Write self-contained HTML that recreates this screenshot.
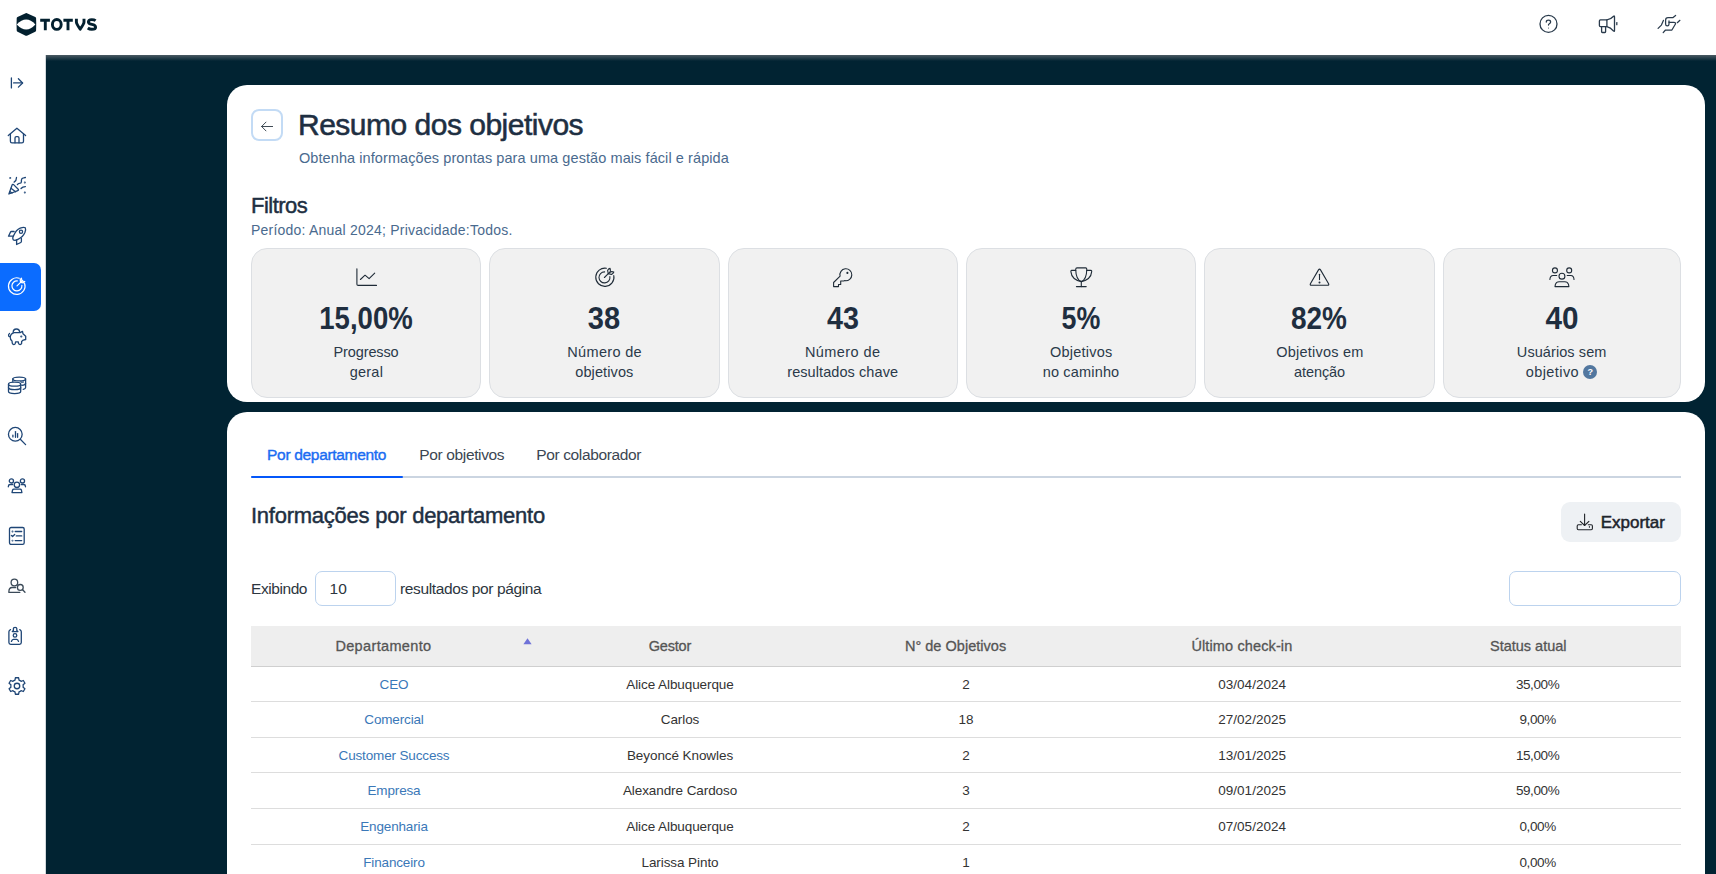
<!DOCTYPE html>
<html lang="pt">
<head>
<meta charset="utf-8">
<title>Resumo dos objetivos</title>
<style>
*{box-sizing:border-box;margin:0;padding:0}
html,body{width:1716px;height:874px;overflow:hidden;background:#fff;font-family:"Liberation Sans",sans-serif;color:#1d2b3a}
.abs{position:absolute}
#topbar{position:absolute;left:0;top:0;width:1716px;height:55px;background:#fff}
#side{position:absolute;left:0;top:55px;width:46px;height:819px;background:#fff;box-shadow:inset -1px 0 0 #d3d8dc}
#dark{position:absolute;left:46px;top:55px;width:1670px;height:819px;background:#012332}
#dark:before{content:"";position:absolute;left:0;top:0;right:0;height:6px;background:linear-gradient(#4b5a63,#012332)}
.card{position:absolute;left:227px;width:1478px;background:#fff;border-radius:20px}
#card1{top:85px;height:317px}
#card2{top:412px;height:500px}
.stat{position:absolute;top:248px;height:150px;background:#f1f1f1;border:1px solid #dcdfe3;border-radius:16px}
.t{position:absolute;white-space:nowrap;line-height:1}
.c{text-align:center}
.q{display:inline-block;width:14px;height:14px;border-radius:50%;background:#52779f;color:#fff;font-size:9px;font-weight:bold;line-height:14px;text-align:center;vertical-align:2px;-webkit-text-stroke:0}

</style>
</head>
<body>
<div id="topbar">
<svg class="abs" style="left:0;top:0" width="110" height="55" viewBox="0 0 110 55">
 <path fill="#03202f" stroke="#03202f" stroke-width="3" stroke-linejoin="round" d="M26.3 14.5 L34.6 18.4 Q34.9 24.4 34.6 30.4 L26.3 34.3 L18.2 30.4 Q17.9 24.4 18.2 18.4 Z"/>
 <path fill="#fff" d="M16.7 24.55 Q26.3 14.6 35.4 24.55 Q26.3 34.5 16.7 24.55 Z"/>
 <g fill="none" stroke="#03202f" stroke-width="2.9">
  <path d="M40.2 20.2 H49.9 M45.3 20.2 V30.2"/>
  <ellipse cx="56.8" cy="24.45" rx="4.4" ry="4.9"/>
  <path d="M63.4 20.2 H72.8 M68 20.2 V30.2"/>
  <path stroke-linejoin="round" d="M76.4 18.8 V22.2 Q76.6 24.2 80.2 29.2 Q83.8 24.2 84 22.2 V18.8"/>
  <path d="M95.6 20.6 Q94.2 19.6 91.8 19.6 Q88.4 19.6 88.4 22 Q88.4 23.8 91.8 24.4 Q95.6 25 95.6 27.2 Q95.6 29.3 91.8 29.3 Q89.4 29.3 87.8 28"/>
 </g>
</svg>
<svg class="abs" style="left:1536px;top:12px" width="26" height="26" viewBox="0 0 26 26" fill="none" stroke="#2a3b4c" stroke-width="1.3" stroke-linecap="round">
 <circle cx="12.5" cy="11.9" r="8.5"/>
 <path d="M10.3 10 Q10.4 8.2 12.5 8.2 Q14.6 8.2 14.6 10 Q14.6 11.1 13.4 11.7 Q12.5 12.2 12.5 13.1"/>
 <circle cx="12.5" cy="15.9" r="0.5" fill="#2a3b4c" stroke="none"/>
</svg>
<svg class="abs" style="left:1596px;top:12px" width="26" height="26" viewBox="0 0 26 26" fill="none" stroke="#2a3b4c" stroke-width="1.3" stroke-linejoin="round" stroke-linecap="round">
 <path d="M4.4 7.9 H10.9 V14.6 H4.4 Q3.4 14.6 3.4 13.6 V8.9 Q3.4 7.9 4.4 7.9 Z"/>
 <path d="M10.9 7.9 Q14.5 7.6 17.6 4.3 Q18.5 3.5 18.5 4.7 V18.6 Q18.5 19.9 17.6 19.1 Q14.5 15.3 10.9 14.6"/>
 <path d="M5.6 14.6 V19.8 Q5.6 20.5 6.3 20.5 H8.9 Q9.6 20.5 9.6 19.8 V14.6"/>
 <path d="M20.8 10.6 V12.7"/>
</svg>
<svg class="abs" style="left:1655px;top:12px" width="28" height="26" viewBox="0 0 28 26" fill="none" stroke="#2a3b4c" stroke-width="1.25" stroke-linejoin="round" stroke-linecap="round">
 <path d="M3.1 16.4 L6.4 13.1 L8.4 8.4"/>
 <path d="M20.6 3.4 L17.8 5.7 H13 Q10.6 5.7 10.6 8.2 V12 Q10.6 13.9 12.3 13.9 Q14 13.9 14 12 V8.9"/>
 <path d="M14 10.3 H19.1 Q20.6 10.3 20.6 11.8 L16.9 18 H10.5 L8.2 20.6"/>
 <path d="M22.3 10.7 L24.9 8.3"/>
</svg>
</div>
<div id="side"></div>
<div class="abs" style="left:0;top:263px;width:41px;height:48px;background:#0b6cff;border-radius:0 7px 7px 0"></div>
<svg class="abs" style="left:4px;top:70px" width="26" height="26" viewBox="0 0 26 26" fill="none" stroke="#1f4676" stroke-width="1.3" stroke-linecap="round" stroke-linejoin="round"><path d="M7.4 8 V17.9"/><path d="M9.6 12.95 H18.5"/><path d="M14.4 8.8 L18.6 12.95 L14.4 17.1"/></svg>
<svg class="abs" style="left:4px;top:122px" width="26" height="26" viewBox="0 0 26 26" fill="none" stroke="#1f4676" stroke-width="1.3" stroke-linecap="round" stroke-linejoin="round"><path d="M4.3 13.5 L12.9 6.25 L21.6 13.5"/><path d="M6.4 12 V19.2 Q6.4 20.8 8 20.8 H17.9 Q19.5 20.8 19.5 19.2 V12"/><path d="M11 20.8 V16 Q11 14.6 12.4 14.6 H13.6 Q15 14.6 15 16 V20.8"/></svg>
<svg class="abs" style="left:4px;top:172px" width="26" height="26" viewBox="0 0 26 26" fill="none" stroke="#1f4676" stroke-width="1.3" stroke-linecap="round" stroke-linejoin="round"><path d="M4.9 22 L8.1 13 Q8.6 11.8 9.6 12.6 L14.2 17.2 Q15 18.2 13.8 18.6 Z"/><path d="M7 16.3 L11.6 19.8"/><path d="M5.9 19.6 L8.1 21"/><circle cx="6.25" cy="6.1" r="0.35"/><path d="M12.5 5.4 Q12.5 8.6 10.1 10.1"/><path d="M13.4 12.5 Q14.6 11.2 16.3 11.1 Q17.4 11 17.4 9.4 V8 Q17.6 6 19.6 5.8 L21.4 5.5"/><circle cx="20.8" cy="10.4" r="0.35"/><path d="M17 16.5 Q18.6 14.6 21.4 14.6"/><circle cx="20.8" cy="20.5" r="0.35"/></svg>
<svg class="abs" style="left:4px;top:223px" width="26" height="26" viewBox="0 0 26 26" fill="none" stroke="#1f4676" stroke-width="1.3" stroke-linecap="round" stroke-linejoin="round"><path d="M9.3 16.9 Q8 15.3 9.8 12.2 Q12 7 16.2 5.1 Q19.7 3.8 21.3 4.7 Q22.1 6.3 20.9 9.4 Q19 13.8 13.9 16.4 Q11 17.9 9.3 16.9 Z"/><circle cx="17" cy="8.8" r="1.6"/><path d="M10.1 8.5 H7.4 Q6.8 8.5 6.5 9.1 L4.5 13.2 H8.7"/><path d="M17.4 15.4 V18.6 Q17.4 19.2 16.8 19.5 L12.6 21.5 V17.2"/></svg>
<svg class="abs" style="left:4px;top:273px" width="26" height="26" viewBox="0 0 26 26" fill="none" stroke="#fff" stroke-width="1.2" stroke-linecap="round" stroke-linejoin="round"><path d="M20.6 10.4 A8.3 8.3 0 1 1 15.3 5.2"/><path d="M17.9 12.4 A5 5 0 1 1 13.3 7.9"/><path d="M13 12.9 L18.4 7.6"/><path d="M16.6 9.4 L16.2 6.6 L17.4 5.2 L18 7.9 Z"/><path d="M16.6 9.4 L19.4 9.8 L20.8 8.6 L18.1 8 Z"/></svg>
<svg class="abs" style="left:4px;top:324px" width="26" height="26" viewBox="0 0 26 26" fill="none" stroke="#1f4676" stroke-width="1.3" stroke-linecap="round" stroke-linejoin="round"><path d="M9.2 8.2 A3.2 3.2 0 0 1 15.6 8.2"/><path d="M10.1 8.6 H16.1 L18.5 7.4 L19 9.8 L21.7 12.2 V15.5 L19.3 16.1 L17.6 17.6 V19.6 Q17.2 20.5 16.1 20.5 Q14.6 20.3 14.5 19.3 L14.3 17.9 H11.6 L11.3 19.4 Q11 20.5 9.8 20.5 Q8.4 20.3 8.3 19.3 L8 17 Q6.2 15.6 6.25 13.2 Q6.3 9.8 10.1 8.6 Z"/><path d="M5.5 9.5 Q4.2 10.6 4.6 11.9 Q5.1 12.8 6.3 12.5"/><circle cx="17.3" cy="12.5" r="0.45"/></svg>
<svg class="abs" style="left:4px;top:373px" width="26" height="26" viewBox="0 0 26 26" fill="none" stroke="#1f4676" stroke-width="1.3" stroke-linecap="round" stroke-linejoin="round"><ellipse cx="10.6" cy="11.2" rx="6.1" ry="2"/><path d="M4.5 11.2 V18.6 Q4.5 20.6 10.6 20.6 Q16.7 20.6 16.7 18.6 V11.2"/><path d="M4.5 14.6 Q4.6 16.6 10.6 16.6 Q16.6 16.6 16.7 14.6"/><path d="M8.8 8.4 V6 Q8.8 4.1 15.2 4.1 Q21.6 4.1 21.6 6 V14.5 Q21.6 15.9 19.3 16.3"/><path d="M8.8 6 Q8.9 7.9 15.2 7.9 Q21.5 7.9 21.6 6"/><path d="M16.9 8.7 Q17.5 9.2 19.3 9" /><path d="M21.6 10.3 Q21.4 12 17.8 12.4"/></svg>
<svg class="abs" style="left:4px;top:423px" width="26" height="26" viewBox="0 0 26 26" fill="none" stroke="#1f4676" stroke-width="1.3" stroke-linecap="round" stroke-linejoin="round"><circle cx="11.3" cy="11.3" r="6.85"/><path d="M16.3 16.3 L21.6 21.6"/><path d="M8.9 12.1 V13.9"/><path d="M11.5 8.6 V14.3"/><path d="M13.6 10.6 V14.3"/></svg>
<svg class="abs" style="left:4px;top:473px" width="26" height="26" viewBox="0 0 26 26" fill="none" stroke="#1f4676" stroke-width="1.3" stroke-linecap="round" stroke-linejoin="round"><circle cx="7.4" cy="7.9" r="2.1"/><circle cx="18.45" cy="7.9" r="2.1"/><circle cx="12.9" cy="11.8" r="2.7"/><path d="M8.6 11.5 H5.9 Q4.3 11.7 4.3 13.8"/><path d="M17.3 11.5 H20 Q21.5 11.7 21.5 13.8"/><path d="M8 19.6 L8.6 17 Q8.9 16.2 9.8 16.2 H16.1 Q17.1 16.2 17.4 17 L17.9 19.6 Z"/></svg>
<svg class="abs" style="left:4px;top:523px" width="26" height="26" viewBox="0 0 26 26" fill="none" stroke="#1f4676" stroke-width="1.3" stroke-linecap="round" stroke-linejoin="round"><rect x="5.5" y="4.5" width="14.7" height="16.9" rx="1.6"/><circle cx="8.5" cy="8.5" r="0.3"/><circle cx="8.5" cy="17.6" r="0.3"/><path d="M11.2 8.5 H17.7"/><path d="M11.2 17.6 H17.7"/><path d="M12.3 12.95 H17.7"/><path d="M7.4 12.5 L8.6 13.5 L10.7 11.5"/></svg>
<svg class="abs" style="left:4px;top:574px" width="26" height="26" viewBox="0 0 26 26" fill="none" stroke="#3b4a58" stroke-width="1.3" stroke-linecap="round" stroke-linejoin="round"><circle cx="10.4" cy="8.5" r="3.3"/><path d="M11.6 13.5 H8 Q5.1 13.7 4.9 17.2 V18.45 H15.8"/><circle cx="16.3" cy="13.4" r="2.9"/><path d="M18.4 15.5 L21 18.3"/></svg>
<svg class="abs" style="left:4px;top:623px" width="26" height="26" viewBox="0 0 26 26" fill="none" stroke="#1f4676" stroke-width="1.3" stroke-linecap="round" stroke-linejoin="round"><path d="M6.5 6.6 Q4.9 7.3 4.9 8.8 V19.5 Q4.9 21.3 6.7 21.3 H15.5 Q17.3 21.3 17.3 19.5 V8.8 Q17.3 7.3 15.8 6.6"/><path d="M8.3 8.6 L9.4 7.6 V5.6 Q9.4 4.4 11.1 4.4 Q12.8 4.4 12.8 5.6 V7.6 L13.9 8.6 Z"/><circle cx="11" cy="12.4" r="1.8"/><path d="M7.4 18.45 Q8 16.4 9.4 16.4 H12.7 Q14 16.4 14.5 18.45"/></svg>
<svg class="abs" style="left:4px;top:673px" width="26" height="26" viewBox="0 0 26 26" fill="none" stroke="#1f4676" stroke-width="1.3" stroke-linecap="round" stroke-linejoin="round"><path d="M9.90 7.63 L10.98 7.14 L11.40 4.75 L14.60 4.75 L15.02 7.14 L16.10 7.63 L17.07 8.32 L19.34 7.49 L20.94 10.27 L19.09 11.82 L19.20 13.00 L19.09 14.18 L20.94 15.73 L19.34 18.51 L17.07 17.68 L16.10 18.37 L15.02 18.86 L14.60 21.25 L11.40 21.25 L10.98 18.86 L9.90 18.37 L8.93 17.68 L6.66 18.51 L5.06 15.73 L6.91 14.18 L6.80 13.00 L6.91 11.82 L5.06 10.27 L6.66 7.49 L8.93 8.32 Z"/><circle cx="13" cy="13" r="2.75"/></svg>
<div id="dark"></div>

<div class="card" id="card1"></div>
<div class="abs" style="left:251px;top:109px;width:32px;height:32px;border:2px solid #c3dbf5;border-radius:8px"></div>
<svg class="abs" style="left:251px;top:109px" width="32" height="32" viewBox="0 0 32 32" fill="none" stroke="#36414c" stroke-width="0.95" stroke-linecap="round" stroke-linejoin="round"><path d="M10.6 17.5 H21.6"/><path d="M15 13.1 L10.6 17.5 L15 21.9"/></svg>
<div class="t" id="title" style="left:298.0px;top:110px;font-size:30px;color:#1e2f42;font-weight:normal;letter-spacing:-0.504px;-webkit-text-stroke:0.55px #1e2f42">Resumo dos objetivos</div>
<div class="t" id="sub" style="left:299.0px;top:151px;font-size:14.5px;color:#4a6a8e;font-weight:normal;letter-spacing:0.081px">Obtenha informações prontas para uma gestão mais fácil e rápida</div>
<div class="t" id="filtros" style="left:251.0px;top:195px;font-size:22px;color:#1e2f42;font-weight:normal;letter-spacing:-0.514px;-webkit-text-stroke:0.45px #1e2f42">Filtros</div>
<div class="t" id="periodo" style="left:251.0px;top:223px;font-size:14px;color:#4a6a8e;font-weight:normal;letter-spacing:0.219px">Período: Anual 2024; Privacidade:Todos.</div>
<div class="stat" style="left:251px;width:230px"></div>
<svg class="abs" style="left:353px;top:264px" width="26" height="26" viewBox="0 0 26 26" fill="none" stroke="#1f2b37" stroke-width="1.1" stroke-linecap="round" stroke-linejoin="round"><path d="M3.9 4.8 V20.2 Q3.9 21.4 5.2 21.4 H23.5"/><path d="M7.4 15.5 L12.05 11.2 L16.1 14.6 L21.7 9.1"/></svg>
<div class="t c" id="num0" style="left:166.10000000000002px;width:400px;top:303px;font-size:30.5px;color:#1f2e3f;font-weight:bold;letter-spacing:0px;transform:scaleX(0.903)">15,00%</div>
<div class="t c" id="l0a" style="left:166.05px;width:400px;top:345px;font-size:14.5px;color:#2b3a4a;font-weight:normal;letter-spacing:-0.117px">Progresso</div>
<div class="t c" id="l0b" style="left:166.39999999999998px;width:400px;top:365px;font-size:14.5px;color:#2b3a4a;font-weight:normal;letter-spacing:0.25px">geral</div>
<div class="stat" style="left:489px;width:231px"></div>
<svg class="abs" style="left:591px;top:264px" width="26" height="26" viewBox="0 0 26 26" fill="none" stroke="#1f2b37" stroke-width="1.1" stroke-linecap="round" stroke-linejoin="round"><path d="M22.8 11.6 A9.1 9.1 0 1 1 15.4 4.3"/><path d="M18.9 12.6 A5.5 5.5 0 1 1 13.6 7.9"/><path d="M13.4 13.5 L17.3 9.7"/><path d="M17.3 9.7 L16.6 6.5 Q17.4 4.7 19 4.3 Q19.8 6.6 19.2 8"/><path d="M17.3 9.7 L20.5 10.4 Q22.3 9.6 22.8 8 Q20.6 7.2 19.2 8 Z"/></svg>
<div class="t c" id="num1" style="left:404.29999999999995px;width:400px;top:303px;font-size:30.5px;color:#1f2e3f;font-weight:bold;letter-spacing:0px;transform:scaleX(0.952)">38</div>
<div class="t c" id="l1a" style="left:404.65px;width:400px;top:345px;font-size:14.5px;color:#2b3a4a;font-weight:normal;letter-spacing:0.333px">Número de</div>
<div class="t c" id="l1b" style="left:404.35px;width:400px;top:365px;font-size:14.5px;color:#2b3a4a;font-weight:normal;letter-spacing:0.117px">objetivos</div>
<div class="stat" style="left:728px;width:230px"></div>
<svg class="abs" style="left:830px;top:264px" width="26" height="26" viewBox="0 0 26 26" fill="none" stroke="#1f2b37" stroke-width="1.1" stroke-linecap="round" stroke-linejoin="round"><path d="M10.1 12.2 A5.95 5.95 0 1 1 14.9 16.6 L13.7 17 H10.7 V20.5 H8.5 V22.6 H3.6 V18.5 Z"/><circle cx="17.4" cy="8.9" r="0.5" fill="#1f2b37"/></svg>
<div class="t c" id="num2" style="left:642.9px;width:400px;top:303px;font-size:30.5px;color:#1f2e3f;font-weight:bold;letter-spacing:0px;transform:scaleX(0.941)">43</div>
<div class="t c" id="l2a" style="left:642.65px;width:400px;top:345px;font-size:14.5px;color:#2b3a4a;font-weight:normal;letter-spacing:0.417px">Número de</div>
<div class="t c" id="l2b" style="left:642.7px;width:400px;top:365px;font-size:14.5px;color:#2b3a4a;font-weight:normal;letter-spacing:0.08px">resultados chave</div>
<div class="stat" style="left:966px;width:230px"></div>
<svg class="abs" style="left:1068px;top:264px" width="26" height="26" viewBox="0 0 26 26" fill="none" stroke="#1f2b37" stroke-width="1.1" stroke-linecap="round" stroke-linejoin="round"><path d="M13.3 17.6 Q7.9 15.6 7.7 5.2 Q7.8 3.9 9 3.9 H17.6 Q18.8 3.9 18.8 5.2 Q18.6 15.6 13.3 17.6 Z"/><path d="M7.7 6.4 H3.6 Q2.8 6.4 2.9 7.6 Q3.6 15.5 13.3 17.6 Q23 15.5 23.7 7.6 Q23.8 6.4 23 6.4 H18.8"/><path d="M13.3 17.6 V22.6"/><path d="M8.4 22.6 H18.2"/></svg>
<div class="t c" id="num3" style="left:880.5999999999999px;width:400px;top:303px;font-size:30.5px;color:#1f2e3f;font-weight:bold;letter-spacing:0px;transform:scaleX(0.88)">5%</div>
<div class="t c" id="l3a" style="left:881.2px;width:400px;top:345px;font-size:14.5px;color:#2b3a4a;font-weight:normal;letter-spacing:0.225px">Objetivos</div>
<div class="t c" id="l3b" style="left:881.0px;width:400px;top:365px;font-size:14.5px;color:#2b3a4a;font-weight:normal;letter-spacing:0.175px">no caminho</div>
<div class="stat" style="left:1204px;width:231px"></div>
<svg class="abs" style="left:1306px;top:264px" width="26" height="26" viewBox="0 0 26 26" fill="none" stroke="#1f2b37" stroke-width="1.1" stroke-linecap="round" stroke-linejoin="round"><path d="M12.5 5.9 Q13.5 4.4 14.5 5.9 L22.6 19.8 Q23.3 21.3 21.6 21.3 H5.4 Q3.7 21.3 4.4 19.8 Z"/><path d="M13.5 10.3 V15.6"/><circle cx="13.5" cy="18.45" r="0.45" fill="#1f2b37"/></svg>
<div class="t c" id="num4" style="left:1119.2px;width:400px;top:303px;font-size:30.5px;color:#1f2e3f;font-weight:bold;letter-spacing:0px;transform:scaleX(0.917)">82%</div>
<div class="t c" id="l4a" style="left:1119.95px;width:400px;top:345px;font-size:14.5px;color:#2b3a4a;font-weight:normal;letter-spacing:0.211px">Objetivos em</div>
<div class="t c" id="l4b" style="left:1119.5px;width:400px;top:365px;font-size:14.5px;color:#2b3a4a;font-weight:normal;letter-spacing:-0.065px">atenção</div>
<div class="stat" style="left:1443px;width:238px"></div>
<svg class="abs" style="left:1549px;top:264px" width="26" height="26" viewBox="0 0 26 26" fill="none" stroke="#1f2b37" stroke-width="1.1" stroke-linecap="round" stroke-linejoin="round"><circle cx="5.95" cy="6.4" r="2.5"/><circle cx="20.2" cy="6.4" r="2.5"/><circle cx="12.95" cy="12.2" r="2.95"/><path d="M7.7 11.5 H4.2 Q1 11.7 0.9 15.5"/><path d="M18.2 11.5 H21.8 Q24.9 11.7 25 15.5"/><path d="M6 22.6 L6.4 20.4 Q7.3 17.7 10 17.7 H15.9 Q18.6 17.7 19.5 20.4 L19.9 22.6 Z"/></svg>
<div class="t c" id="num5" style="left:1362.0px;width:400px;top:303px;font-size:30.5px;color:#1f2e3f;font-weight:bold;letter-spacing:0px;transform:scaleX(0.973)">40</div>
<div class="t c" id="l5a" style="left:1361.65px;width:400px;top:345px;font-size:14.5px;color:#2b3a4a;font-weight:normal;letter-spacing:0.081px">Usuários sem</div>
<div class="t c" id="l5b" style="left:1361.65px;width:400px;top:365px;font-size:14.5px;color:#2b3a4a;font-weight:normal;letter-spacing:0.409px">objetivo <span class="q">?</span></div>
<div class="card" id="card2"></div>
<div class="abs" style="left:251px;top:476px;width:1430px;height:2px;background:#cbd5e1"></div>
<div class="abs" style="left:251px;top:476px;width:152px;height:2px;background:#0457fa;border-radius:1px"></div>
<div class="t" id="tab1" style="left:267.1px;top:447px;font-size:15.5px;color:#1a6cf2;font-weight:normal;letter-spacing:-0.32px;-webkit-text-stroke:0.4px #1a6cf2">Por departamento</div>
<div class="t" id="tab2" style="left:419.3px;top:447px;font-size:15.5px;color:#3b4652;font-weight:normal;letter-spacing:-0.358px">Por objetivos</div>
<div class="t" id="tab3" style="left:536.3px;top:447px;font-size:15.5px;color:#3b4652;font-weight:normal;letter-spacing:-0.372px">Por colaborador</div>
<div class="t" id="info" style="left:251.0px;top:505px;font-size:22px;color:#1e2f42;font-weight:normal;letter-spacing:-0.246px;-webkit-text-stroke:0.45px #1e2f42">Informações por departamento</div>
<div class="abs" style="left:1561px;top:502px;width:120px;height:40px;background:#eef1f4;border-radius:9px"></div>
<svg class="abs" style="left:1570px;top:508px" width="30" height="28" viewBox="0 0 30 28" fill="none" stroke="#1f2328" stroke-width="1.1" stroke-linecap="round" stroke-linejoin="round"><path d="M14.6 6.1 V17.3"/><path d="M10.3 13.3 L14.6 17.5 L18.9 13.3"/><path d="M11.4 16.7 H8.4 Q7.2 16.7 7.2 17.9 V20.6 Q7.2 21.8 8.4 21.8 H21.2 Q22.4 21.8 22.4 20.6 V17.9 Q22.4 16.7 21.2 16.7 H18.3"/><path d="M19.4 18.6 V19.2"/></svg>
<div class="t" id="export" style="left:1600.7px;top:514px;font-size:17px;color:#1d242c;font-weight:normal;letter-spacing:0px;-webkit-text-stroke:0.5px #1d242c;transform:scaleX(1.0);transform-origin:0 0">Exportar</div>
<div class="t" id="exib" style="left:251.0px;top:581px;font-size:15.5px;color:#2d3640;font-weight:normal;letter-spacing:-0.429px">Exibindo</div>
<div class="abs" style="left:315px;top:571px;width:81px;height:35px;border:1px solid #bcd3ee;border-radius:7px"></div>
<div class="t" id="ten" style="left:329.6px;top:581px;font-size:15.5px;color:#2d3640;font-weight:normal;letter-spacing:0px">10</div>
<div class="t" id="res" style="left:400px;top:581px;font-size:15.5px;color:#2d3640;font-weight:normal;letter-spacing:-0.37px">resultados por página</div>
<div class="abs" style="left:1509px;top:571px;width:172px;height:35px;border:1px solid #bcd3ee;border-radius:7px"></div>
<div class="abs" style="left:251px;top:626px;width:1430px;height:40px;background:#eeeeee"></div>
<div class="abs" style="left:251px;top:666px;width:1430px;height:1px;background:#cfcfcf"></div>
<div class="t c" id="h0" style="left:183.45px;width:400px;top:639px;font-size:14.5px;color:#555555;font-weight:normal;letter-spacing:0.353px;-webkit-text-stroke:0.3px #555555">Departamento</div>
<div class="t c" id="h1" style="left:469.9px;width:400px;top:639px;font-size:14.5px;color:#555555;font-weight:normal;letter-spacing:-0.2px;-webkit-text-stroke:0.3px #555555">Gestor</div>
<div class="t c" id="h2" style="left:755.55px;width:400px;top:639px;font-size:14.5px;color:#555555;font-weight:normal;letter-spacing:0.022px;-webkit-text-stroke:0.3px #555555">N° de Objetivos</div>
<div class="t c" id="h3" style="left:1041.9px;width:400px;top:639px;font-size:14.5px;color:#555555;font-weight:normal;letter-spacing:0.127px;-webkit-text-stroke:0.3px #555555">Último check-in</div>
<div class="t c" id="h4" style="left:1328.25px;width:400px;top:639px;font-size:14.5px;color:#555555;font-weight:normal;letter-spacing:-0.01px;-webkit-text-stroke:0.3px #555555">Status atual</div>
<svg class="abs" style="left:522px;top:637px" width="11" height="9" viewBox="0 0 11 9"><path d="M1.4 7.3 L5.5 1.2 L9.6 7.3 Z" fill="#6f72d8"/></svg>
<div class="t c" id="r0c0" style="left:194.00px;width:400px;top:678px;font-size:13.5px;color:#3a78b8;font-weight:normal;letter-spacing:-0.15px">CEO</div>
<div class="t c" id="r0c1" style="left:480.00px;width:400px;top:678px;font-size:13.5px;color:#333333;font-weight:normal;letter-spacing:-0.08px">Alice Albuquerque</div>
<div class="t c" id="r0c2" style="left:766.00px;width:400px;top:678px;font-size:13.5px;color:#333333;font-weight:normal;letter-spacing:0px">2</div>
<div class="t c" id="r0c3" style="left:1052.15px;width:400px;top:678px;font-size:13.5px;color:#333333;font-weight:normal;letter-spacing:0.012px">03/04/2024</div>
<div class="t c" id="r0c4" style="left:1337.60px;width:400px;top:678px;font-size:13.5px;color:#333333;font-weight:normal;letter-spacing:-0.4px">35,00%</div>
<div class="abs" style="left:251px;top:701px;width:1430px;height:1px;background:#dddddd"></div>
<div class="t c" id="r1c0" style="left:194.00px;width:400px;top:713px;font-size:13.5px;color:#3a78b8;font-weight:normal;letter-spacing:-0.15px">Comercial</div>
<div class="t c" id="r1c1" style="left:480.00px;width:400px;top:713px;font-size:13.5px;color:#333333;font-weight:normal;letter-spacing:-0.08px">Carlos</div>
<div class="t c" id="r1c2" style="left:766.00px;width:400px;top:713px;font-size:13.5px;color:#333333;font-weight:normal;letter-spacing:0px">18</div>
<div class="t c" id="r1c3" style="left:1052.15px;width:400px;top:713px;font-size:13.5px;color:#333333;font-weight:normal;letter-spacing:0.012px">27/02/2025</div>
<div class="t c" id="r1c4" style="left:1337.60px;width:400px;top:713px;font-size:13.5px;color:#333333;font-weight:normal;letter-spacing:-0.4px">9,00%</div>
<div class="abs" style="left:251px;top:737px;width:1430px;height:1px;background:#dddddd"></div>
<div class="t c" id="r2c0" style="left:194.00px;width:400px;top:749px;font-size:13.5px;color:#3a78b8;font-weight:normal;letter-spacing:-0.15px">Customer Success</div>
<div class="t c" id="r2c1" style="left:480.00px;width:400px;top:749px;font-size:13.5px;color:#333333;font-weight:normal;letter-spacing:-0.08px">Beyoncé Knowles</div>
<div class="t c" id="r2c2" style="left:766.00px;width:400px;top:749px;font-size:13.5px;color:#333333;font-weight:normal;letter-spacing:0px">2</div>
<div class="t c" id="r2c3" style="left:1052.15px;width:400px;top:749px;font-size:13.5px;color:#333333;font-weight:normal;letter-spacing:0.012px">13/01/2025</div>
<div class="t c" id="r2c4" style="left:1337.60px;width:400px;top:749px;font-size:13.5px;color:#333333;font-weight:normal;letter-spacing:-0.4px">15,00%</div>
<div class="abs" style="left:251px;top:772px;width:1430px;height:1px;background:#dddddd"></div>
<div class="t c" id="r3c0" style="left:194.00px;width:400px;top:784px;font-size:13.5px;color:#3a78b8;font-weight:normal;letter-spacing:-0.15px">Empresa</div>
<div class="t c" id="r3c1" style="left:480.00px;width:400px;top:784px;font-size:13.5px;color:#333333;font-weight:normal;letter-spacing:-0.08px">Alexandre Cardoso</div>
<div class="t c" id="r3c2" style="left:766.00px;width:400px;top:784px;font-size:13.5px;color:#333333;font-weight:normal;letter-spacing:0px">3</div>
<div class="t c" id="r3c3" style="left:1052.15px;width:400px;top:784px;font-size:13.5px;color:#333333;font-weight:normal;letter-spacing:0.012px">09/01/2025</div>
<div class="t c" id="r3c4" style="left:1337.60px;width:400px;top:784px;font-size:13.5px;color:#333333;font-weight:normal;letter-spacing:-0.4px">59,00%</div>
<div class="abs" style="left:251px;top:808px;width:1430px;height:1px;background:#dddddd"></div>
<div class="t c" id="r4c0" style="left:194.00px;width:400px;top:820px;font-size:13.5px;color:#3a78b8;font-weight:normal;letter-spacing:-0.15px">Engenharia</div>
<div class="t c" id="r4c1" style="left:480.00px;width:400px;top:820px;font-size:13.5px;color:#333333;font-weight:normal;letter-spacing:-0.08px">Alice Albuquerque</div>
<div class="t c" id="r4c2" style="left:766.00px;width:400px;top:820px;font-size:13.5px;color:#333333;font-weight:normal;letter-spacing:0px">2</div>
<div class="t c" id="r4c3" style="left:1052.15px;width:400px;top:820px;font-size:13.5px;color:#333333;font-weight:normal;letter-spacing:0.012px">07/05/2024</div>
<div class="t c" id="r4c4" style="left:1337.60px;width:400px;top:820px;font-size:13.5px;color:#333333;font-weight:normal;letter-spacing:-0.4px">0,00%</div>
<div class="abs" style="left:251px;top:844px;width:1430px;height:1px;background:#dddddd"></div>
<div class="t c" id="r5c0" style="left:194.00px;width:400px;top:856px;font-size:13.5px;color:#3a78b8;font-weight:normal;letter-spacing:-0.15px">Financeiro</div>
<div class="t c" id="r5c1" style="left:480.00px;width:400px;top:856px;font-size:13.5px;color:#333333;font-weight:normal;letter-spacing:-0.08px">Larissa Pinto</div>
<div class="t c" id="r5c2" style="left:766.00px;width:400px;top:856px;font-size:13.5px;color:#333333;font-weight:normal;letter-spacing:0px">1</div>
<div class="t c" id="r5c4" style="left:1337.60px;width:400px;top:856px;font-size:13.5px;color:#333333;font-weight:normal;letter-spacing:-0.4px">0,00%</div>
</body>
</html>
